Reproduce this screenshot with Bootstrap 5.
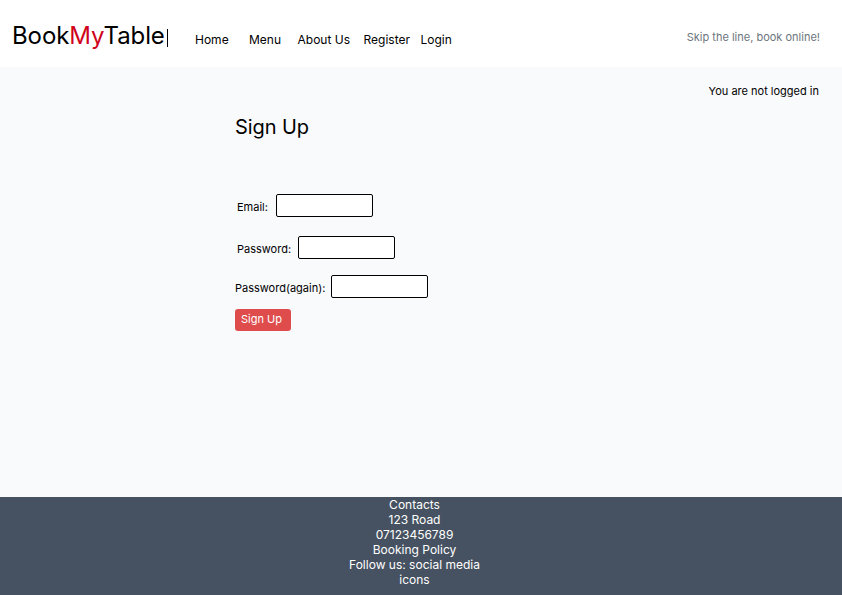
<!DOCTYPE html>
<html lang="en">
<head>
<meta charset="utf-8">
<meta name="viewport" content="width=device-width, initial-scale=1">
<title>BookMyTable - Sign Up</title>
<link rel="stylesheet" href="https://cdn.jsdelivr.net/npm/bootstrap@5.3.0/dist/css/bootstrap.min.css">
<style>
body{font-family:Inter,sans-serif;font-size:11px;line-height:14px;color:#000;background:#f9fafc}
.topbar{height:67px;padding:0 22px 0 12px}
.brand{font-size:24px;line-height:30px;letter-spacing:-.1px;color:#000;width:183px;padding:4px 0 0}
.brand span{color:#d0021b}
.brand .caret{display:inline-block;width:1px;height:18px;background:#000;margin-left:2px;vertical-align:-3px}
.menu{padding-top:12px}
.menu .nav-link{font-size:12px;line-height:15px;color:#000;padding:0;white-space:nowrap}
.nav-home{width:54px}.nav-menu{width:48.5px}.nav-about{width:66px}.nav-register{width:57px}
.tagline{color:#6c757d;padding-top:7px}
.status{padding:17px 23px 0 0}
.signup{margin-left:235px}
.signup h1{font-size:20px;line-height:24px;font-weight:400;letter-spacing:-.1px;margin:17px 0 55px}
.signup label{padding-top:2px}
.lbl-email{width:41px;padding-left:2px}
.lbl-pass{width:63px;padding-left:2px}
.lbl-again{width:96px}
.field{border:1px solid #000;border-radius:2px;width:97px;height:23px;padding:0 4px;background:#fff}
.row-pass{margin:19px 0 16px}
.row-again{margin-bottom:11px}
.btn-signup{display:block;background:#de4c4c;color:#fff;font-size:11px;line-height:14px;width:56px;height:22px;padding:0 3px 2px 0;border:0;border-radius:3px}
footer{height:98px;padding-right:13px;background:#465261;color:#fff;font-size:12px;line-height:15px}
</style>
<script src="https://cdn.jsdelivr.net/npm/bootstrap@5.3.0/dist/js/bootstrap.bundle.min.js"></script>
</head>
<body class="d-flex flex-column vh-100 overflow-hidden">
<header class="topbar bg-white d-flex align-items-center">
<a class="brand text-decoration-none text-nowrap" href="#">Book<span>My</span>Table<i class="caret"></i></a>
<nav class="menu nav flex-nowrap">
<a class="nav-link nav-home" href="#">Home</a><a class="nav-link nav-menu" href="#">Menu</a><a class="nav-link nav-about" href="#">About Us</a><a class="nav-link nav-register" href="#">Register</a><a class="nav-link" href="#">Login</a>
</nav>
<div class="tagline ms-auto">Skip the line, book online!</div>
</header>
<main class="flex-grow-1">
<div class="status text-end">You are not logged in</div>
<form class="signup">
<h1>Sign Up</h1>
<div class="d-flex align-items-center"><label class="lbl-email" for="email">Email:</label><input class="field" id="email" type="email"></div>
<div class="row-pass d-flex align-items-center"><label class="lbl-pass" for="pass">Password:</label><input class="field" id="pass" type="password"></div>
<div class="row-again d-flex align-items-center"><label class="lbl-again" for="again">Password(again):</label><input class="field" id="again" type="password"></div>
<button class="btn btn-signup" type="button">Sign Up</button>
</form>
</main>
<footer class="text-center">Contacts<br>123 Road<br>07123456789<br>Booking Policy<br>Follow us: social media<br>icons</footer>
</body>
</html>
